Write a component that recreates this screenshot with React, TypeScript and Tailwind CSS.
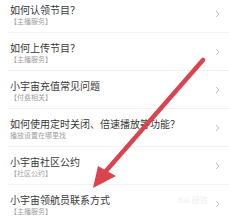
const items = [
  { title: '如何认领节目？', sub: '【主播服务】' },
  { title: '如何上传节目？', sub: '【主播服务】' },
  { title: '小宇宙充值常见问题', sub: '【付费相关】' },
  { title: '如何使用定时关闭、倍速播放等功能？', sub: '播放设置在哪里找' },
  { title: '小宇宙社区公约', sub: '【社区公约】' },
  { title: '小宇宙领航员联系方式', sub: '【主播服务】' },
];

const Chevron = () => (
  <svg width="5" height="8" viewBox="0 0 5 8" className="shrink-0">
    <path d="M1 1 L4 4 L1 7" fill="none" stroke="#c4c4c4" strokeWidth="1" />
  </svg>
);

export default function App() {
  return (
    <div
      className="relative w-[229px] h-[220px] overflow-hidden bg-white"
      style={{ fontFamily: '"Noto Sans CJK SC", "Noto Sans", sans-serif' }}
    >
      <div className="-mt-[5px] flex flex-col">
        {items.map((item, i) => (
          <div
            key={i}
            className="ml-[8px] h-[38px] flex items-center justify-between border-b border-[#f3f3f3] pr-[9px]"
          >
            <div className="pl-[2px] pt-[3px] min-w-0">
              <p className="text-[10px] leading-[12px] text-[#383838] whitespace-nowrap">
                {item.title}
              </p>
              <p className="mt-[1.5px] text-[7px] leading-[9px] text-[#a0a0a0] whitespace-nowrap">
                {item.sub}
              </p>
            </div>
            <Chevron />
          </div>
        ))}
      </div>

      {/* watermark */}
      <div className="absolute left-[178px] top-[195px] text-[8px] leading-[10px] text-[#efefef] whitespace-nowrap">
        Bai 经验
      </div>

      {/* red arrow */}
      <svg
        className="absolute left-0 top-0 pointer-events-none"
        width="229"
        height="220"
        viewBox="0 0 229 220"
      >
        <line
          x1="203"
          y1="60"
          x2="106"
          y2="171"
          stroke="#d9444f"
          strokeWidth="4.5"
          strokeLinecap="round"
        />
        <polygon points="93,188 98,166 116,176" fill="#d9444f" />
      </svg>
    </div>
  );
}
